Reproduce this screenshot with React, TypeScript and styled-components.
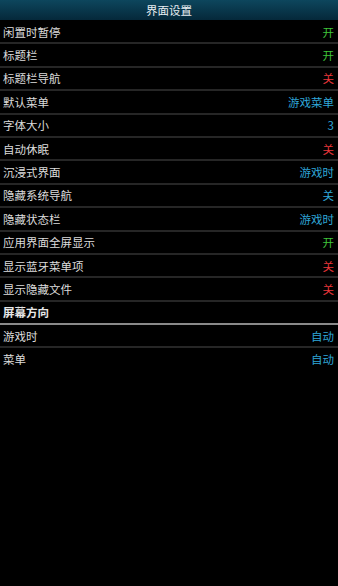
import styled, { createGlobalStyle } from "styled-components";

type Tone = "on" | "off" | "info";

interface Item {
  label: string;
  value: string;
  tone: Tone;
}

const general: Item[] = [
  { label: "闲置时暂停", value: "开", tone: "on" },
  { label: "标题栏", value: "开", tone: "on" },
  { label: "标题栏导航", value: "关", tone: "off" },
  { label: "默认菜单", value: "游戏菜单", tone: "info" },
  { label: "字体大小", value: "3", tone: "info" },
  { label: "自动休眠", value: "关", tone: "off" },
  { label: "沉浸式界面", value: "游戏时", tone: "info" },
  { label: "隐藏系统导航", value: "关", tone: "info" },
  { label: "隐藏状态栏", value: "游戏时", tone: "info" },
  { label: "应用界面全屏显示", value: "开", tone: "on" },
  { label: "显示蓝牙菜单项", value: "关", tone: "off" },
  { label: "显示隐藏文件", value: "关", tone: "off" },
];

const orientation: Item[] = [
  { label: "游戏时", value: "自动", tone: "info" },
  { label: "菜单", value: "自动", tone: "info" },
];

const toneColor: Record<Tone, string> = {
  on: "#3fc43a",
  off: "#e8363a",
  info: "#2fa6d8",
};

const GlobalStyle = createGlobalStyle`
  html, body {
    margin: 0;
    padding: 0;
    background: #000;
  }
  body {
    font-family: "Noto Sans CJK SC", "Noto Sans", sans-serif;
  }
`;

const Screen = styled.div`
  width: 338px;
  height: 586px;
  background: #000;
  display: flex;
  flex-direction: column;
`;

const TitleBar = styled.div`
  height: 20px;
  margin-bottom: 1px;
  display: flex;
  align-items: center;
  justify-content: center;
  background: linear-gradient(#0d465d, #05283a);
  color: #e8eef2;
  font-size: 11.5px;
`;

const List = styled.div`
  display: flex;
  flex-direction: column;
`;

const Row = styled.div`
  height: 21.4px;
  padding: 0 4px 0 3px;
  display: flex;
  align-items: center;
  justify-content: space-between;
  border-bottom: 2px solid #262626;
  font-size: 11.5px;
  color: #dcdcdc;

  &:last-child {
    border-bottom: none;
  }
`;

const Value = styled.span<{ $tone: Tone }>`
  color: ${(p) => toneColor[p.$tone]};
`;

const SectionHeader = styled.div`
  height: 21.4px;
  padding: 0 3px;
  display: flex;
  align-items: center;
  border-bottom: 2px solid #8a8a8a;
  font-size: 11.5px;
  font-weight: 700;
  color: #e8e8e8;
`;

export default function App() {
  return (
    <>
      <GlobalStyle />
      <Screen>
        <TitleBar>界面设置</TitleBar>
        <List>
          {general.map((item) => (
            <Row key={item.label}>
              <span>{item.label}</span>
              <Value $tone={item.tone}>{item.value}</Value>
            </Row>
          ))}
          <SectionHeader>屏幕方向</SectionHeader>
          {orientation.map((item) => (
            <Row key={item.label}>
              <span>{item.label}</span>
              <Value $tone={item.tone}>{item.value}</Value>
            </Row>
          ))}
        </List>
      </Screen>
    </>
  );
}
